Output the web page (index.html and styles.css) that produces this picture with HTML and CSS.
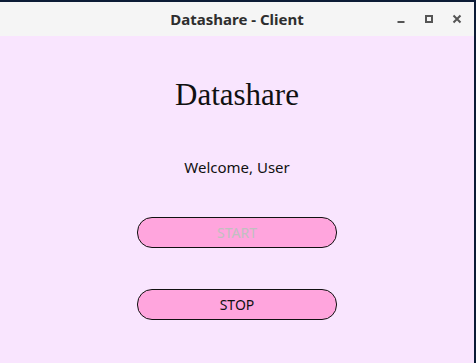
FILE: index.html
```html
<!DOCTYPE html>
<html lang="en">
<head>
    <meta charset="UTF-8">
    <title>Datashare - Client</title>
    <link rel="stylesheet" href="styles.css">
</head>
<body>
    <div class="window">
        <div class="titlebar">
            <span class="title">Datashare - Client</span>
            <div class="controls">
                <svg class="ctl" width="10" height="10" viewBox="0 0 10 10"><rect x="1.5" y="7" width="7" height="2" fill="#555"/></svg>
                <svg class="ctl" width="10" height="10" viewBox="0 0 10 10"><rect x="2" y="2" width="6" height="6" fill="none" stroke="#555" stroke-width="2"/></svg>
                <svg class="ctl" width="10" height="10" viewBox="0 0 10 10"><path d="M1.5 1.5 L8.5 8.5 M8.5 1.5 L1.5 8.5" stroke="#555" stroke-width="2"/></svg>
            </div>
        </div>
        <div class="content">
            <h1 class="heading">Datashare</h1>
            <p class="welcome">Welcome, User</p>
            <button class="btn" disabled>START</button>
            <button class="btn stop">STOP</button>
        </div>
    </div>
</body>
</html>
```

FILE: styles.css
```css
* {
    margin: 0;
    padding: 0;
    box-sizing: border-box;
}

html, body {
    height: 100%;
}

body {
    background: #0c1c36;
    font-family: "Noto Sans", "Open Sans", sans-serif;
    padding-top: 2px;
    padding-right: 2px;
}

.window {
    height: 100%;
    display: flex;
    flex-direction: column;
}

.titlebar {
    height: 34px;
    background: #f5f5f5;
    display: flex;
    align-items: center;
    justify-content: center;
    position: relative;
}

.title {
    font-weight: bold;
    font-size: 15px;
    color: #2e2e2e;
}

.controls {
    position: absolute;
    right: 12px;
    top: 12px;
    display: flex;
    gap: 18px;
}

.content {
    flex: 1;
    background: #f9e5fe;
    display: flex;
    flex-direction: column;
    align-items: center;
}

.heading {
    font-family: "Liberation Serif", serif;
    font-weight: normal;
    font-size: 31px;
    color: #111;
    margin-top: 41px;
    line-height: 36px;
}

.welcome {
    font-size: 15px;
    color: #111;
    margin-top: 44px;
    line-height: 20px;
}

.btn {
    width: 200px;
    height: 31px;
    border: 1px solid #111;
    border-radius: 15px;
    background: #ffa5dd;
    font-family: "Noto Sans", "Open Sans", sans-serif;
    font-size: 14px;
    color: #111;
    margin-top: 40px;
}

.btn:disabled {
    color: #c0c0c0;
}

.btn.stop {
    margin-top: 41px;
}
```
